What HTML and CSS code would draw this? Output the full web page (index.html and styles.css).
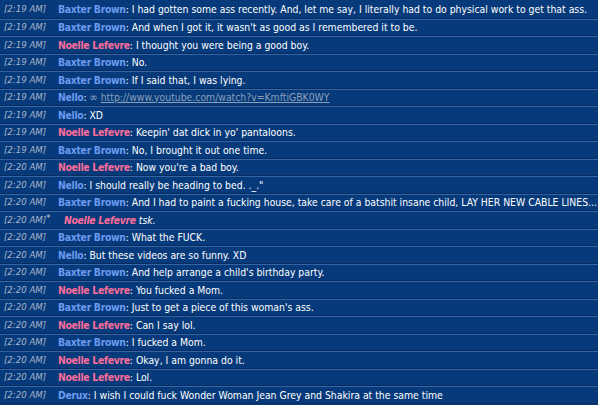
FILE: index.html
```html
<!DOCTYPE html>
<html>
<head>
<meta charset="utf-8">
<link rel="stylesheet" href="styles.css">
</head>
<body>
<div class="log">
  <div class="row"><span class="ts">[2:19 AM]</span><span class="msg"><b class="bax">Baxter Brown</b>: I had gotten some ass recently. And, let me say, I literally had to do physical work to get that ass.</span></div>
  <div class="row"><span class="ts">[2:19 AM]</span><span class="msg"><b class="bax">Baxter Brown</b>: And when I got it, it wasn't as good as I remembered it to be.</span></div>
  <div class="row"><span class="ts">[2:19 AM]</span><span class="msg"><b class="noe">Noelle Lefevre</b>: I thought you were being a good boy.</span></div>
  <div class="row"><span class="ts">[2:19 AM]</span><span class="msg"><b class="bax">Baxter Brown</b>: No.</span></div>
  <div class="row"><span class="ts">[2:19 AM]</span><span class="msg"><b class="bax">Baxter Brown</b>: If I said that, I was lying.</span></div>
  <div class="row"><span class="ts">[2:19 AM]</span><span class="msg"><b class="nel">Nello</b>: <span class="linkicon">∞</span> <a class="link">http://www.youtube.com/watch?v=KmftiGBK0WY</a></span></div>
  <div class="row"><span class="ts">[2:19 AM]</span><span class="msg"><b class="nel">Nello</b>: XD</span></div>
  <div class="row"><span class="ts">[2:19 AM]</span><span class="msg"><b class="noe">Noelle Lefevre</b>: Keepin' dat dick in yo' pantaloons.</span></div>
  <div class="row"><span class="ts">[2:19 AM]</span><span class="msg"><b class="bax">Baxter Brown</b>: No, I brought it out one time.</span></div>
  <div class="row"><span class="ts">[2:20 AM]</span><span class="msg"><b class="noe">Noelle Lefevre</b>: Now you're a bad boy.</span></div>
  <div class="row"><span class="ts">[2:20 AM]</span><span class="msg"><b class="nel">Nello</b>: I should really be heading to bed. ._."</span></div>
  <div class="row"><span class="ts">[2:20 AM]</span><span class="msg"><b class="bax">Baxter Brown</b>: And I had to paint a fucking house, take care of a batshit insane child, LAY HER NEW CABLE LINES...</span></div>
  <div class="row emote"><span class="ts">[2:20 AM]</span><span class="star">*</span><span class="msg"><b class="noe">Noelle Lefevre</b> tsk.</span></div>
  <div class="row"><span class="ts">[2:20 AM]</span><span class="msg"><b class="bax">Baxter Brown</b>: What the FUCK.</span></div>
  <div class="row"><span class="ts">[2:20 AM]</span><span class="msg"><b class="nel">Nello</b>: But these videos are so funny. XD</span></div>
  <div class="row"><span class="ts">[2:20 AM]</span><span class="msg"><b class="bax">Baxter Brown</b>: And help arrange a child's birthday party.</span></div>
  <div class="row"><span class="ts">[2:20 AM]</span><span class="msg"><b class="noe">Noelle Lefevre</b>: You fucked a Mom.</span></div>
  <div class="row"><span class="ts">[2:20 AM]</span><span class="msg"><b class="bax">Baxter Brown</b>: Just to get a piece of this woman's ass.</span></div>
  <div class="row"><span class="ts">[2:20 AM]</span><span class="msg"><b class="noe">Noelle Lefevre</b>: Can I say lol.</span></div>
  <div class="row"><span class="ts">[2:20 AM]</span><span class="msg"><b class="bax">Baxter Brown</b>: I fucked a Mom.</span></div>
  <div class="row"><span class="ts">[2:20 AM]</span><span class="msg"><b class="noe">Noelle Lefevre</b>: Okay, I am gonna do it.</span></div>
  <div class="row"><span class="ts">[2:20 AM]</span><span class="msg"><b class="noe">Noelle Lefevre</b>: Lol.</span></div>
  <div class="row"><span class="ts">[2:20 AM]</span><span class="msg"><b class="nel">Derux</b>: I wish I could fuck Wonder Woman Jean Grey and Shakira at the same time</span></div>
</div>
</body>
</html>
```
FILE: styles.css
```css
html, body {
  margin: 0;
  padding: 0;
  background: #073a7b;
}
.log {
  display: flex;
  flex-direction: column;
  width: 598px;
  height: 405px;
  overflow: hidden;
}
.row {
  display: flex;
  align-items: center;
  height: 15.5px;
  border-top: 1px solid #3464a4;
  border-bottom: 1px solid #062c62;
  white-space: nowrap;
  flex: none;
}
.row:first-child {
  border-top: none;
  height: 17.5px;
  padding-top: 0;
}
.ts {
  width: 58px;
  flex: none;
  padding-left: 4px;
  box-sizing: border-box;
  font-family: "DejaVu Sans", sans-serif;
  font-style: italic;
  font-size: 8.6px;
  color: #a9b6c9;
}
.msg {
  font-family: "DejaVu Sans Condensed", "DejaVu Sans", sans-serif;
  font-stretch: condensed;
  font-size: 10.35px;
  color: #ffffff;
}
.msg b {
  font-weight: bold;
  letter-spacing: -0.3px;
}
.bax { color: #6b9af0; }
.noe { color: #ff6d99; }
.nel { color: #6b9af0; }
.link {
  color: #8aa0b9;
  text-decoration: underline;
}
.linkicon {
  color: #9fb0c6;
  font-size: 11px;
}
.emote .ts { width: 46px; }
.star {
  width: 18px;
  flex: none;
  color: #c8d2e0;
  font-family: "DejaVu Sans", sans-serif;
  font-size: 9px;
  align-self: flex-start;
  margin-top: 1px;
}
.emote .msg {
  font-style: italic;
}
```
